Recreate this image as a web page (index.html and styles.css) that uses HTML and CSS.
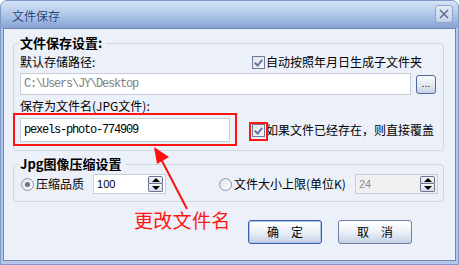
FILE: index.html
```html
<!DOCTYPE html>
<html lang="zh-CN">
<head>
<meta charset="utf-8">
<title>文件保存</title>
<link rel="stylesheet" href="styles.css">
</head>
<body>
<div class="window">
  <div class="titlebar">
    <span class="title">文件保存</span>
    <span class="close" aria-label="关闭">
      <svg width="16" height="16" viewBox="0 0 16 16"><path d="M4 4 L12 12 M12 4 L4 12" stroke="#56657f" stroke-width="1.3" fill="none"/></svg>
    </span>
  </div>
  <div class="body">
    <fieldset class="group g1">
      <legend>文件保存设置:</legend>
      <div class="row split">
        <span>默认存储路径:</span>
        <span class="check"><span class="cb on"></span><span>自动按照年月日生成子文件夹</span></span>
      </div>
      <div class="row pathrow">
        <div class="input path">C:\Users\JY\Desktop</div>
        <span class="browse">...</span>
      </div>
      <div class="row label3">保存为文件名(JPG文件):</div>
      <div class="row split namerow">
        <div class="namewrap">
          <div class="input name">pexels-photo-774909</div>
          <span class="mark mark-input"></span>
        </div>
        <span class="check"><span class="cbwrap"><span class="cb on"></span><span class="mark mark-cb"></span></span><span>如果文件已经存在，则直接覆盖</span></span>
      </div>
    </fieldset>
    <fieldset class="group g2">
      <legend>Jpg图像压缩设置</legend>
      <div class="row qrow">
        <span class="radio on"></span><span class="rlabel">压缩品质</span>
        <div class="spin q"><span class="val">100</span><span class="arrows"><span class="up"></span><span class="down"></span></span></div>
        <span class="radio r2"></span><span class="rlabel">文件大小上限(单位K)</span>
        <div class="spin size disabled"><span class="val">24</span><span class="arrows"><span class="up"></span><span class="down"></span></span></div>
      </div>
    </fieldset>
    <div class="buttons">
      <span class="btn default">确　定</span>
      <span class="btn">取　消</span>
    </div>
  </div>
  <svg class="arrow" width="459" height="265" viewBox="0 0 459 265">
    <line x1="187" y1="209" x2="160" y2="157" stroke="#ff1010" stroke-width="2"/>
    <polygon points="154,147 169,157 157,164" fill="#ff1010"/>
  </svg>
  <div class="annot">更改文件名</div>
</div>
</body>
</html>
```
FILE: styles.css
```css
html, body {
  margin: 0;
  padding: 0;
  background: #ffffff;
}
body {
  font-family: "Noto Sans CJK SC", "Liberation Sans", sans-serif;
  font-size: 12px;
  color: #000;
}
.window {
  position: relative;
  width: 459px;
  height: 265px;
  box-sizing: border-box;
  border: 1px solid #7e98c8;
  border-radius: 7px 7px 0 0;
  background: #b3c8ea;
  padding: 0 2px 3px 2px;
  display: flex;
  flex-direction: column;
  overflow: hidden;
}
.titlebar {
  height: 27px;
  margin: 0 -2px;
  padding: 0 5px 0 11px;
  background: linear-gradient(#d6e4f7, #b3cae9 45%, #9bb5de 75%, #87a4d3);
  display: flex;
  align-items: flex-start;
  justify-content: space-between;
  flex: none;
}
.title {
  color: #1d3f7f;
  line-height: 16px;
  margin-top: 7px;
  text-shadow: 0 0 1px rgba(255,255,255,0.6);
}
.close {
  width: 16px;
  height: 16px;
  margin-top: 4px;
  border: 1px solid #8ea3c9;
  border-radius: 3px;
  background: linear-gradient(#e3ebf7, #c2d1ea);
  display: flex;
}
.body {
  flex: 1;
  background: #ecf0f8;
  border: 1px solid #6f86b4;
  padding: 0 11px 0 9px;
  display: flex;
  flex-direction: column;
}
.group {
  margin: 0;
  border: 1px solid #cfd5e0;
  border-radius: 4px;
  min-width: 0;
}
.group legend {
  font-weight: bold;
  font-size: 13px;
  line-height: 16px;
  padding: 0 4px 0 1px;
  margin-left: -1px;
}
.g1 {
  margin-top: 6px;
  padding: 0 7px 8px 6px;
}
.g2 {
  margin-top: 5px;
  padding: 0 5px 7px 6px;
}
.row {
  line-height: 16px;
}
.split {
  display: grid;
  grid-template-columns: 232px auto;
  align-items: center;
  margin-top: 3px;
}
.check {
  display: flex;
  align-items: center;
  gap: 1px;
}
.cb {
  width: 11px;
  height: 11px;
  border: 1px solid #707a99;
  background: linear-gradient(135deg, #dfe3ec, #f6f7fa);
  position: relative;
  display: block;
}
.cb.on::after {
  content: "";
  position: absolute;
  left: 3px;
  top: 1px;
  width: 3px;
  height: 6px;
  border-right: 2px solid #6777a0;
  border-bottom: 2px solid #6777a0;
  transform: rotate(40deg);
}
.pathrow {
  display: flex;
  align-items: center;
  gap: 5px;
  margin-top: 3px;
}
.input {
  box-sizing: border-box;
  border: 1px solid #c7cdd9;
  background: #fff;
  font-family: "Liberation Mono", monospace;
  font-size: 12px;
  letter-spacing: -1.2px;
  padding-left: 3px;
  display: flex;
  align-items: center;
}
.path {
  width: 392px;
  height: 22px;
  color: #808080;
}
.browse {
  width: 18px;
  height: 17px;
  border: 1px solid #51699b;
  border-radius: 3px;
  background: linear-gradient(#fbfcfe, #e3e9f3 55%, #c6d1e4);
  font-family: "Liberation Sans", sans-serif;
  font-size: 11px;
  line-height: 14px;
  text-align: center;
  color: #222;
  letter-spacing: 0;
}
.label3 {
  margin-top: 3px;
}
.namerow {
  margin-top: 4px;
}
.namewrap {
  position: relative;
  width: 210px;
}
.name {
  width: 210px;
  height: 24px;
  color: #000;
}
.mark {
  position: absolute;
  border: 2px solid #ff1414;
  pointer-events: none;
}
.mark-input {
  left: -7px;
  top: -5px;
  right: -7px;
  bottom: -4px;
}
.cbwrap {
  position: relative;
  display: block;
}
.mark-cb {
  left: -3px;
  top: -2px;
  right: -3px;
  bottom: -4px;
}
.qrow {
  display: flex;
  align-items: center;
  margin-top: 2px;
}
.radio {
  width: 11px;
  height: 11px;
  border: 1px solid #8d96ac;
  border-radius: 50%;
  background: linear-gradient(135deg, #dde1ea, #fbfcfd);
  position: relative;
  margin-left: 1px;
}
.radio.on::after {
  content: "";
  position: absolute;
  left: 3px;
  top: 3px;
  width: 5px;
  height: 5px;
  border-radius: 50%;
  background: #66718c;
}
.rlabel {
  margin-left: 2px;
  font-size: 12px;
}
.radio.r2 {
  margin-left: 53px;
}
.spin {
  box-sizing: border-box;
  height: 20px;
  border: 1px solid #c7cdd9;
  background: #fff;
  display: flex;
  align-items: center;
  justify-content: space-between;
  padding: 0 2px 0 3px;
  font-family: "Liberation Sans", sans-serif;
  font-size: 11px;
}
.spin.q {
  width: 73px;
  margin-left: 9px;
}
.spin.size {
  width: 83px;
  margin-left: auto;
}
.spin.disabled {
  background: #f0f0f0;
  color: #8c8c8c;
}
.arrows {
  display: flex;
  flex-direction: column;
  gap: 0;
}
.arrows span {
  box-sizing: border-box;
  width: 15px;
  height: 8px;
  border: 1px solid #6a7390;
  background: linear-gradient(#f7f8fb, #d6dbe6);
  display: flex;
  align-items: center;
  justify-content: center;
}
.arrows .up {
  border-radius: 2px 2px 0 0;
}
.arrows .down {
  border-radius: 0 0 2px 2px;
  border-top: none;
  height: 8px;
}
.arrows .up::after {
  content: "";
  border-left: 4px solid transparent;
  border-right: 4px solid transparent;
  border-bottom: 4px solid #000;
}
.arrows .down::after {
  content: "";
  border-left: 4px solid transparent;
  border-right: 4px solid transparent;
  border-top: 4px solid #000;
}
.buttons {
  display: flex;
  gap: 16px;
  margin-top: 18px;
  padding-left: 235px;
}
.btn {
  box-sizing: border-box;
  width: 74px;
  height: 24px;
  border: 1px solid #6f80a8;
  border-radius: 3px;
  background: linear-gradient(#ffffff, #eef2f9 45%, #d6deee 80%, #c3cfe6);
  display: flex;
  align-items: center;
  justify-content: center;
  line-height: 16px;
}
.btn.default {
  border-color: #3d62ad;
  box-shadow: inset 0 0 0 1px #a9c0ea;
}
.arrow {
  position: absolute;
  left: -1px;
  top: -1px;
  pointer-events: none;
}
.annot {
  position: absolute;
  left: 133px;
  top: 208px;
  font-size: 19px;
  line-height: 22px;
  color: #ff1414;
  letter-spacing: 0.3px;
}
```
